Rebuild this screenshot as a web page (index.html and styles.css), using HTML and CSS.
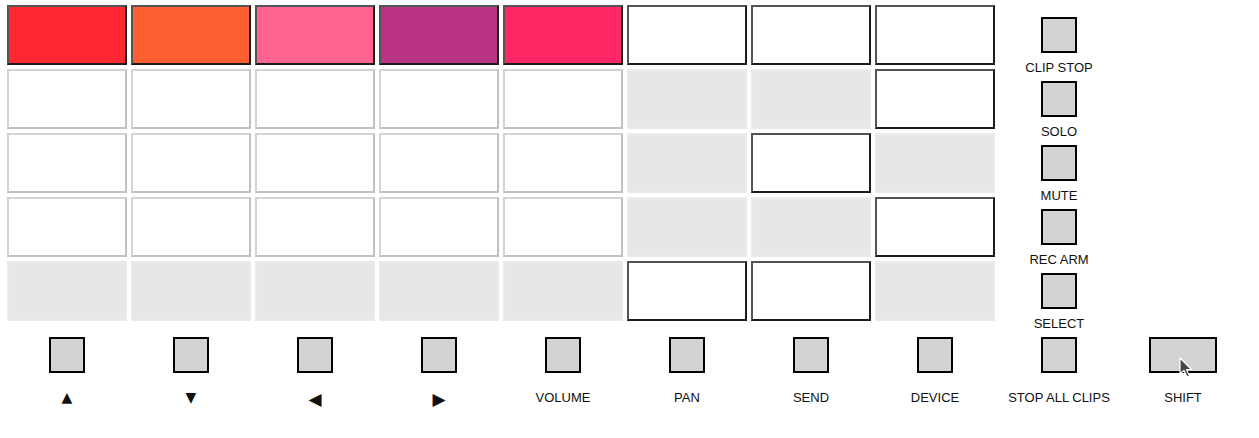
FILE: index.html
```html
<!DOCTYPE html>
<html>
<head>
<meta charset="utf-8">
<link rel="stylesheet" href="styles.css">
</head>
<body>
<div class="ctrl">
  <div class="pad on c-red"></div>
  <div class="pad on c-orange"></div>
  <div class="pad on c-pink"></div>
  <div class="pad on c-purple"></div>
  <div class="pad on c-crimson"></div>
  <div class="pad on"></div>
  <div class="pad on"></div>
  <div class="pad on"></div>
  <div class="side"><div class="btn"></div><div class="lbl side-lbl">CLIP STOP</div></div>
  <div class="spacer"></div>

  <div class="pad off"></div>
  <div class="pad off"></div>
  <div class="pad off"></div>
  <div class="pad off"></div>
  <div class="pad off"></div>
  <div class="pad empty"></div>
  <div class="pad empty"></div>
  <div class="pad on"></div>
  <div class="side"><div class="btn"></div><div class="lbl side-lbl">SOLO</div></div>
  <div class="spacer"></div>

  <div class="pad off"></div>
  <div class="pad off"></div>
  <div class="pad off"></div>
  <div class="pad off"></div>
  <div class="pad off"></div>
  <div class="pad empty"></div>
  <div class="pad on"></div>
  <div class="pad empty"></div>
  <div class="side"><div class="btn"></div><div class="lbl side-lbl">MUTE</div></div>
  <div class="spacer"></div>

  <div class="pad off"></div>
  <div class="pad off"></div>
  <div class="pad off"></div>
  <div class="pad off"></div>
  <div class="pad off"></div>
  <div class="pad empty"></div>
  <div class="pad empty"></div>
  <div class="pad on"></div>
  <div class="side"><div class="btn"></div><div class="lbl side-lbl">REC ARM</div></div>
  <div class="spacer"></div>

  <div class="pad empty"></div>
  <div class="pad empty"></div>
  <div class="pad empty"></div>
  <div class="pad empty"></div>
  <div class="pad empty"></div>
  <div class="pad on"></div>
  <div class="pad on"></div>
  <div class="pad empty"></div>
  <div class="side"><div class="btn"></div><div class="lbl side-lbl">SELECT</div></div>
  <div class="spacer"></div>

  <div class="bottom"><div class="btn"></div><div class="lbl bot-lbl arrow">▲</div></div>
  <div class="bottom"><div class="btn"></div><div class="lbl bot-lbl arrow">▼</div></div>
  <div class="bottom"><div class="btn"></div><div class="lbl bot-lbl arrow side-arrow">◀</div></div>
  <div class="bottom"><div class="btn"></div><div class="lbl bot-lbl arrow side-arrow">▶</div></div>
  <div class="bottom"><div class="btn"></div><div class="lbl bot-lbl">VOLUME</div></div>
  <div class="bottom"><div class="btn"></div><div class="lbl bot-lbl">PAN</div></div>
  <div class="bottom"><div class="btn"></div><div class="lbl bot-lbl">SEND</div></div>
  <div class="bottom"><div class="btn"></div><div class="lbl bot-lbl">DEVICE</div></div>
  <div class="bottom"><div class="btn"></div><div class="lbl bot-lbl">STOP ALL CLIPS</div></div>
  <div class="bottom shift-cell">
    <div class="btn wide"></div><div class="lbl bot-lbl">SHIFT</div>
    <svg class="cursor" width="14" height="22" viewBox="0 0 14 22">
      <path d="M1 1 L1 17 L5 13.5 L8 20 L10.5 19 L7.5 12.5 L12.5 12.5 Z" fill="#444" stroke="#fff" stroke-width="1.2" stroke-linejoin="round"/>
    </svg>
  </div>
</div>
</body>
</html>
```

FILE: styles.css
```css
html, body {
  margin: 0;
  padding: 0;
  background: #fff;
}
body {
  padding: 5px 7px;
  font-family: "Liberation Sans", Arial, "DejaVu Sans", sans-serif;
}
.ctrl {
  display: grid;
  grid-template-columns: repeat(10, 120px);
  grid-template-rows: repeat(5, 60px) auto;
  gap: 4px;
}
.pad {
  box-sizing: border-box;
  border: 2px solid;
}
.pad.on {
  background: #fff;
  border-color: #545454 #1c1c1c #1c1c1c #545454;
}
.pad.off {
  background: #fff;
  border-color: #d4d4d4 #c1c1c1 #c1c1c1 #d4d4d4;
}
.pad.empty {
  background: #e7e7e7;
  border-color: #ebebeb;
}
.c-red { background: #ff2830 !important; }
.c-orange { background: #ff5e33 !important; }
.c-pink { background: #ff6390 !important; }
.c-purple { background: #b93486 !important; }
.c-crimson { background: #ff2764 !important; }

.side, .bottom {
  display: flex;
  flex-direction: column;
  align-items: center;
  padding-top: 12px;
  min-height: 0;
}
.btn {
  box-sizing: border-box;
  flex: 0 0 auto;
  width: 36px;
  height: 36px;
  background: #d3d3d3;
  border: 2px solid #000;
}
.btn.wide {
  width: 68px;
}
.lbl {
  flex: 0 0 auto;
  font-size: 13px;
  line-height: 15px;
  color: #111;
  white-space: nowrap;
}
.side-lbl {
  margin-top: 7px;
}
.bot-lbl {
  margin-top: 17px;
  padding-bottom: 10px;
}
.arrow {
  font-family: "DejaVu Sans", sans-serif;
  font-size: 14px;
}
.arrow.side-arrow {
  font-size: 17px;
  line-height: 16px;
  margin-top: 18px;
}
.shift-cell {
  position: relative;
}
.cursor {
  position: absolute;
  left: 56px;
  top: 32px;
}
```
